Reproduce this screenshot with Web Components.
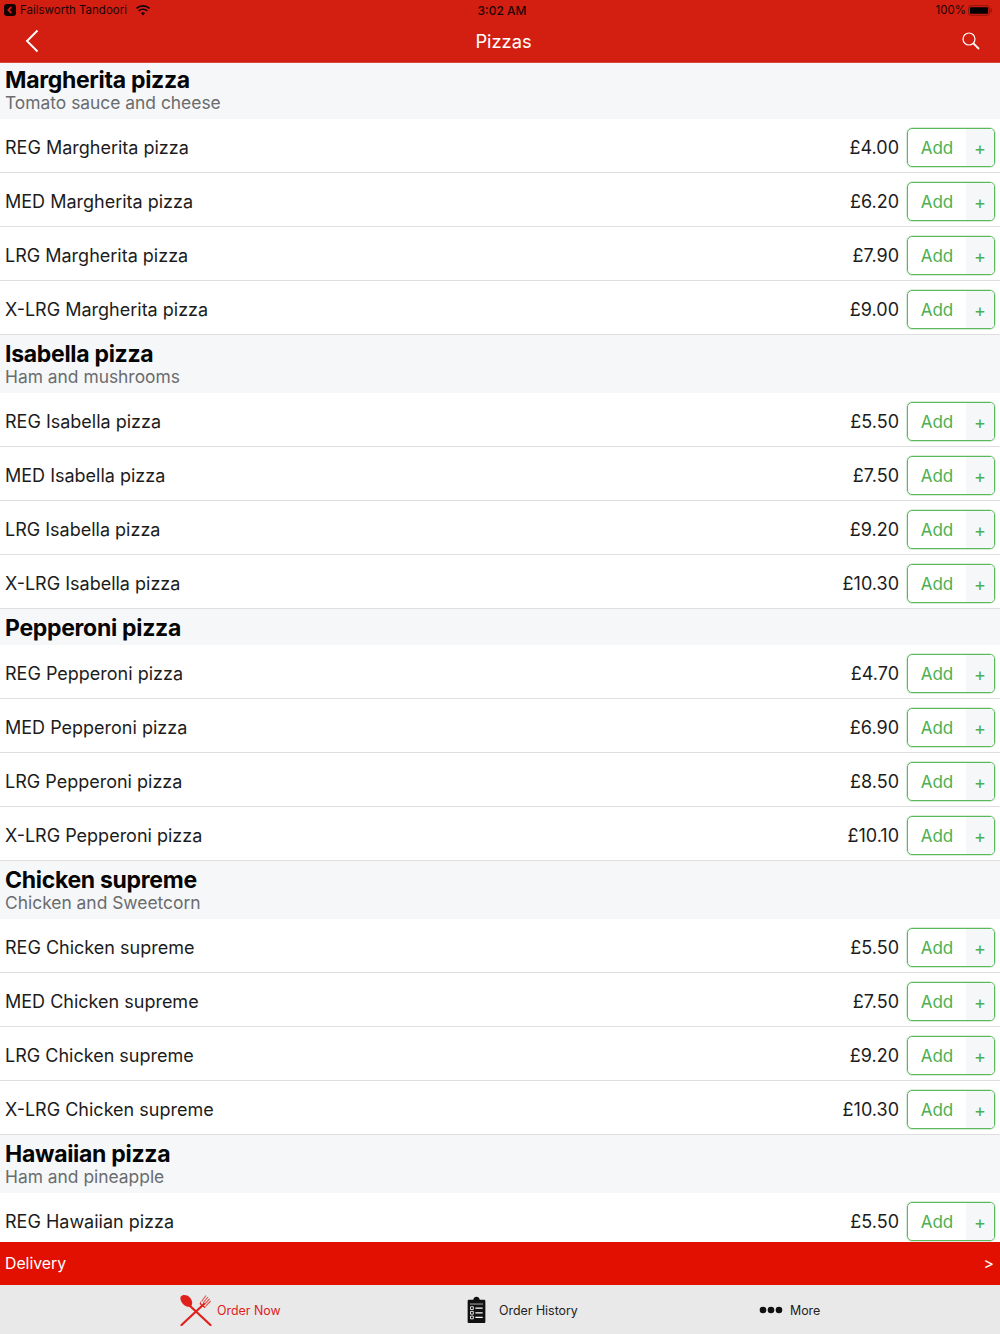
<!DOCTYPE html>
<html>
<head>
<meta charset="utf-8">
<title>Pizzas</title>
<style>
    html, body {
        margin: 0;
        padding: 0;
        font-family: "Inter", "Liberation Sans", sans-serif;
    }
</style>
</head>
<body>

<app-shell>
    <status-bar></status-bar>
    <nav-bar title="Pizzas"></nav-bar>
    <menu-list>
        <menu-section title="Margherita pizza" sub="Tomato sauce and cheese">
            <menu-row name="REG Margherita pizza" price="£4.00"></menu-row>
            <menu-row name="MED Margherita pizza" price="£6.20"></menu-row>
            <menu-row name="LRG Margherita pizza" price="£7.90"></menu-row>
            <menu-row name="X-LRG Margherita pizza" price="£9.00"></menu-row>
        </menu-section>
        <menu-section title="Isabella pizza" sub="Ham and mushrooms">
            <menu-row name="REG Isabella pizza" price="£5.50"></menu-row>
            <menu-row name="MED Isabella pizza" price="£7.50"></menu-row>
            <menu-row name="LRG Isabella pizza" price="£9.20"></menu-row>
            <menu-row name="X-LRG Isabella pizza" price="£10.30"></menu-row>
        </menu-section>
        <menu-section title="Pepperoni pizza">
            <menu-row name="REG Pepperoni pizza" price="£4.70"></menu-row>
            <menu-row name="MED Pepperoni pizza" price="£6.90"></menu-row>
            <menu-row name="LRG Pepperoni pizza" price="£8.50"></menu-row>
            <menu-row name="X-LRG Pepperoni pizza" price="£10.10"></menu-row>
        </menu-section>
        <menu-section title="Chicken supreme" sub="Chicken and Sweetcorn">
            <menu-row name="REG Chicken supreme" price="£5.50"></menu-row>
            <menu-row name="MED Chicken supreme" price="£7.50"></menu-row>
            <menu-row name="LRG Chicken supreme" price="£9.20"></menu-row>
            <menu-row name="X-LRG Chicken supreme" price="£10.30"></menu-row>
        </menu-section>
        <menu-section title="Hawaiian pizza" sub="Ham and pineapple">
            <menu-row name="REG Hawaiian pizza" price="£5.50"></menu-row>
        </menu-section>
    </menu-list>
    <delivery-bar label="Delivery"></delivery-bar>
    <tab-bar>
        <tab-item label="Order Now" active style="--gap: 5px">
            <svg slot="icon" width="32" height="32" viewBox="0 0 32 32">
                <path d="M9 11 L30.5 31" stroke="#e0201a" stroke-width="2.2" stroke-linecap="round"/>
                <path d="M.8 2.6 C2.6 .2 7 .6 9.8 3.4 C12.4 6.2 13 10.2 11.2 12 C9 13.8 5.4 12.6 3 10 C.6 7.4 -.2 4.4 .8 2.6Z" fill="#e0201a"/>
                <path d="M24 10 L1.5 31" stroke="#e0201a" stroke-width="2.2" stroke-linecap="round"/>
                <path d="M21.5 7.5 L26 1.5 M23.2 8.8 L28 3 M24.8 10.2 L29.6 4.8 M26 11.8 L30.6 7" stroke="#e0201a" stroke-width="1.1" opacity=".75"/>
                <path d="M21 7 C20.5 10 22.5 12.5 26.5 12.5 L24.5 14 L19.5 10Z" fill="#e0201a"/>
            </svg>
        </tab-item>
        <tab-item label="Order History" style="--gap: 13px">
            <svg slot="icon" width="19" height="28" viewBox="0 0 20 30">
                <path d="M2 4 H6.5 C7 2 8 .8 10 .8 C12 .8 13 2 13.5 4 H18 C19 4 19.5 4.6 19.5 5.5 V27.5 C19.5 28.6 19 29 18 29 H2 C1 29 .5 28.6 .5 27.5 V5.5 C.5 4.6 1 4 2 4Z" fill="#111"/>
                <path d="M3 8.6 H17" stroke="#fff" stroke-width=".7"/>
                <path d="M3.6 11.5 h3 v3 h-3z M3.6 16.5 h3 v3 h-3z M3.6 21.5 h3 v3 h-3z" fill="none" stroke="#fff" stroke-width=".9"/>
                <path d="M8.8 13 H16.6 M8.8 18 H16.6 M8.8 23 H16.6" stroke="#fff" stroke-width="1.3"/>
            </svg>
        </tab-item>
        <tab-item label="More" style="--gap: 7px">
            <svg slot="icon" width="24" height="8" viewBox="0 0 24 8">
                <circle cx="4" cy="4" r="3.3" fill="#111"/>
                <circle cx="12" cy="4" r="3.3" fill="#111"/>
                <circle cx="20" cy="4" r="3.3" fill="#111"/>
            </svg>
        </tab-item>
    </tab-bar>
</app-shell>

<script>
'use strict()'

const define = (name, html) => {
    const template = document.createElement('template')
    template.innerHTML = html
    customElements.define(name, class extends HTMLElement {
        constructor() {
            super()
            this.attachShadow({mode: 'open'})
            this.shadowRoot.appendChild(template.content.cloneNode(true))
        }
        connectedCallback() {
            // fill [data-attr] nodes from the attributes of the host
            this.shadowRoot.querySelectorAll('[data-attr]').forEach(el => {
                const value = this.getAttribute(el.dataset.attr)
                if (value === null) el.remove()
                else el.textContent = value
            })
        }
    })
}

define('app-shell', /*html*/`
<style>
    :host {
        display: flex;
        flex-direction: column;
        width: 1000px;
        height: 1334px;
        overflow: hidden;
        background: #fff;
        font-family: "Inter", "Liberation Sans", sans-serif;
    }
</style>
<slot></slot>
`)

define('status-bar', /*html*/`
<style>
    :host {
        display: flex;
        flex: none;
        align-items: center;
        justify-content: space-between;
        height: 20px;
        padding: 0 8px 0 4px;
        background: #d31f11;
        color: #1c0403;
        font-size: 11.5px;
    }
    .side {
        flex: 1;
        display: flex;
        align-items: center;
    }
    .right { justify-content: flex-end; }
    .mid { margin-left: 8px; font-size: 12px; font-weight: 500; }
    .back {
        display: flex;
        align-items: center;
        justify-content: center;
        width: 12px;
        height: 12px;
        margin-right: 4px;
        border-radius: 3px;
        background: #120202;
    }
    .wifi { margin-left: 9px; }
    .batt { margin-left: 2px; }
</style>
<div class="side">
    <span class="back"><svg width="8" height="8" viewBox="0 0 8 8"><path d="M5.4 1 L2.4 4 L5.4 7" fill="none" stroke="#d31f11" stroke-width="1.8"/></svg></span>
    <span>Failsworth Tandoori</span>
    <svg class="wifi" width="14" height="11" viewBox="0 0 14 11">
        <path d="M.5 3.4 C4 .1 10 .1 13.5 3.4" fill="none" stroke="#120202" stroke-width="1.7"/>
        <path d="M2.7 5.8 C5 3.7 9 3.7 11.3 5.8" fill="none" stroke="#120202" stroke-width="1.7"/>
        <path d="M4.9 8 C6.2 6.9 7.8 6.9 9.1 8 L7 10.4Z" fill="#120202"/>
    </svg>
</div>
<span class="mid">3:02 AM</span>
<div class="side right">
    <span>100%</span>
    <svg class="batt" width="24" height="11" viewBox="0 0 25 11">
        <rect x=".5" y=".5" width="22" height="10" rx="2.5" fill="none" stroke="#8c140b"/>
        <rect x="2" y="2" width="19" height="7" rx="1" fill="#000"/>
        <rect x="23.5" y="3.5" width="1.2" height="4" fill="#8c140b"/>
    </svg>
</div>
`)

define('nav-bar', /*html*/`
<style>
    :host {
        display: flex;
        flex: none;
        align-items: center;
        justify-content: space-between;
        box-sizing: border-box;
        height: 43px;
        padding: 0 20px 0 25px;
        background: #d31f11;
        border-bottom: 1px solid #d8483d;
    }
    h1 {
        margin: 0 0 1px 6px;
        font-size: 18.3px;
        font-weight: 400;
        color: #fff;
    }
    svg { display: block; }
</style>
<svg width="14" height="24" viewBox="0 0 14 24"><path d="M12.5 1.5 L2 12 L12.5 22.5" fill="none" stroke="#fff" stroke-width="1.9"/></svg>
<h1 data-attr="title"></h1>
<svg width="18" height="18" viewBox="0 0 18 18">
    <circle cx="7" cy="7" r="6" fill="none" stroke="#fff" stroke-width="1.2"/>
    <path d="M11.4 11.4 L17 17" stroke="#fff" stroke-width="1.8"/>
</svg>
`)

define('menu-list', /*html*/`
<style>
    :host {
        display: block;
        flex: 1;
        min-height: 0;
        overflow: hidden;
    }
    /* first header slides under the nav bar */
    ::slotted(menu-section:first-child) { margin-top: -2px; }
</style>
<slot></slot>
`)

define('menu-section', /*html*/`
<style>
    :host { display: block; }
    header {
        padding: 4px 5px 2px;
        background: #f6f7f9;
    }
    h2 {
        margin: 0;
        font-size: 23px;
        line-height: 30px;
        font-weight: 700;
        letter-spacing: -.3px;
        color: #050505;
    }
    p {
        margin: -4px 0 2px;
        font-size: 17.4px;
        line-height: 24px;
        color: #6a6c6e;
    }
</style>
<header>
    <h2 data-attr="title"></h2>
    <p data-attr="sub"></p>
</header>
<slot></slot>
`)

define('menu-row', /*html*/`
<style>
    :host {
        display: flex;
        align-items: center;
        box-sizing: border-box;
        height: 54px;
        padding: 4px 5px 0;
        border-bottom: 1px solid #dfdfdf;
        background: #fff;
        color: #1c1c1c;
        font-size: 18px;
    }
    .name { flex: 1; }
    .price { margin-right: 8px; }
</style>
<span class="name" data-attr="name"></span>
<span class="price" data-attr="price"></span>
<add-button></add-button>
`)

define('add-button', /*html*/`
<style>
    :host {
        display: flex;
        box-sizing: border-box;
        width: 88px;
        height: 39px;
        border: 1px solid #5cb85c;
        border-radius: 5px;
        box-shadow: 0 0 0 .5px rgba(92, 184, 92, .5);
        overflow: hidden;
        color: #4caf50;
    }
    .add {
        flex: 1;
        display: flex;
        align-items: center;
        justify-content: center;
        padding-top: 1px;
        font-size: 17px;
    }
    .plus {
        display: flex;
        align-items: center;
        justify-content: center;
        width: 28px;
        padding-top: 2px;
        box-sizing: border-box;
        background: #f6f7f9;
        font-size: 18px;
    }
</style>
<span class="add">Add</span>
<span class="plus">+</span>
`)

define('delivery-bar', /*html*/`
<style>
    :host {
        display: flex;
        flex: none;
        align-items: center;
        justify-content: space-between;
        box-sizing: border-box;
        height: 43px;
        padding: 0 6px 0 5px;
        background: #e21000;
        color: #fff;
        font-size: 15.8px;
    }
</style>
<span data-attr="label"></span>
<span>&gt;</span>
`)

define('tab-bar', /*html*/`
<style>
    :host {
        display: grid;
        flex: none;
        grid-template-columns: 287px 292px auto;
        height: 49px;
        padding-left: 180px;
        background: #e9e9e9;
    }
</style>
<slot></slot>
`)

define('tab-item', /*html*/`
<style>
    :host {
        display: flex;
        align-items: center;
        gap: var(--gap);
        color: #222;
        font-size: 12.4px;
    }
    :host([active]) { color: #e0201a; }
    span { padding-top: 2px; }
</style>
<slot name="icon"></slot>
<span data-attr="label"></span>
`)
</script>
</body>
</html>
